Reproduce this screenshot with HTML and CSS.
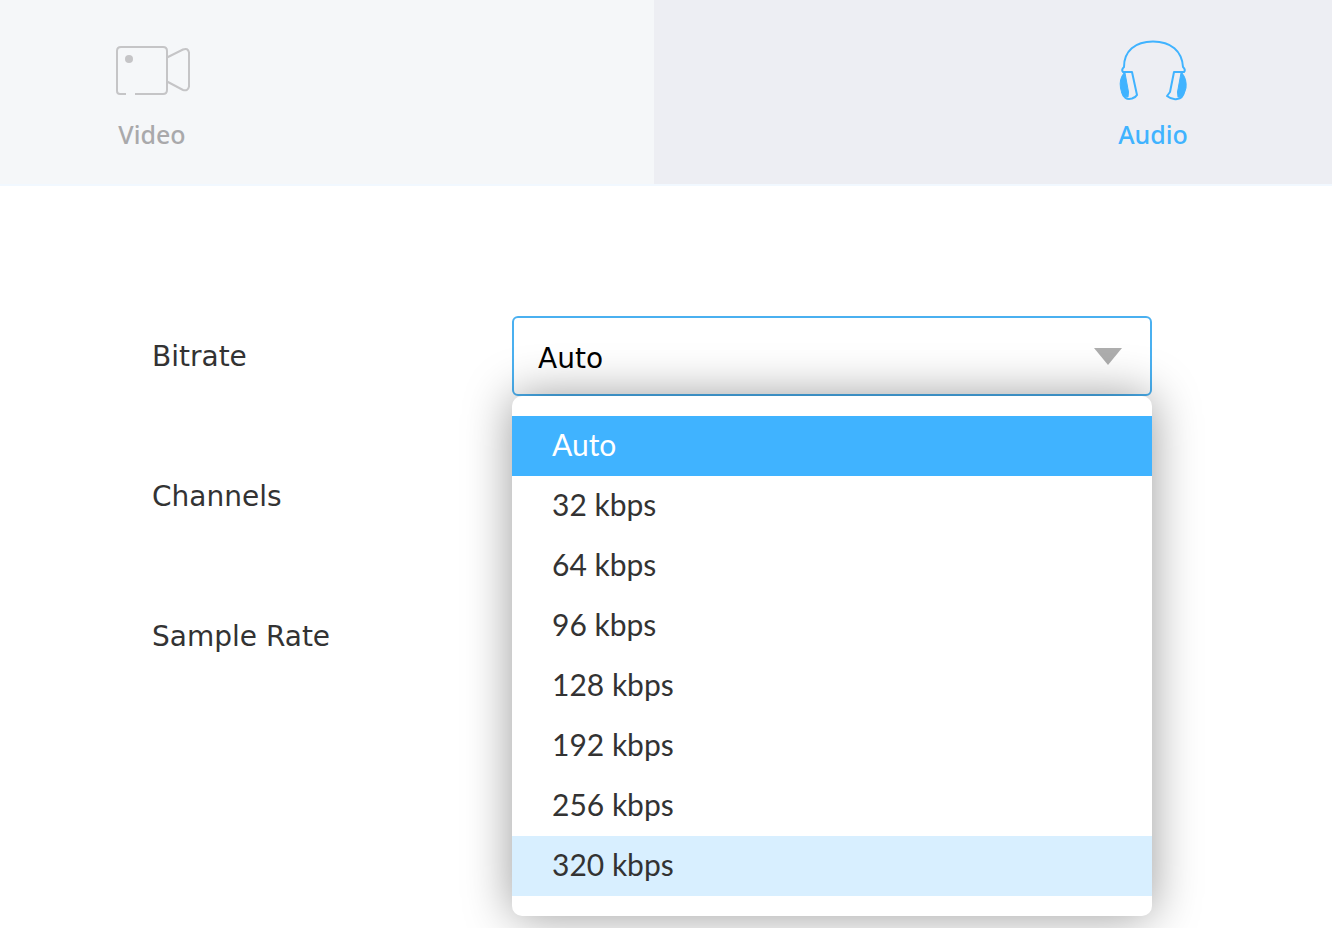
FILE: index.html
```html
<!DOCTYPE html>
<html lang="en">
<head>
<meta charset="utf-8">
<title>Audio settings</title>
<link rel="stylesheet" href="styles.css">
</head>
<body>
<nav class="tabs">
  <button class="tab tab-video" type="button">
    <span class="tab-content">
      <svg class="tab-icon" width="76" height="64" viewBox="0 0 76 64" fill="none" stroke="#c5c5c7" stroke-width="2" aria-hidden="true">
        <path d="M12 55H6q-3 0-3-3V12q0-4 4-4h42q4 0 4 4v39q0 4-4 4H21"/>
        <path d="M53 18.500 69 10.500q5-2 6 3v34q-1 5-6 3.500L53 42.500"/>
        <circle cx="15" cy="20" r="4" fill="#c5c5c7" stroke="none"/>
      </svg>
      <span>Video</span>
    </span>
  </button>
  <button class="tab tab-audio" type="button">
    <span class="tab-content">
      <svg class="tab-icon" width="76" height="64" viewBox="0 0 76 64" fill="none" stroke="#40b3ff" stroke-width="2" stroke-linejoin="round" aria-hidden="true">
        <path d="M11 33H8q-2-2 1-5C9 12 20 2.500 38 2.500S67 12 68 28q3 3 1 5h-4"/>
        <path d="M8 33h9l5 23q-1 2-5 3.500-8 2-10-6.500"/>
        <path d="M68 33h-9l-4 20-3 4q5 4 10 3 6-1 7-7"/>
        <path d="M9 34q-5 6-3.500 15Q7 58 13 58l.5-5L10 34zM67 34q5 6 4 15-2 9-8 9l-.5-5L66 34z" fill="#40b3ff" stroke-width="1"/>
      </svg>
      <span>Audio</span>
    </span>
  </button>
</nav>
<main class="settings">
  <div class="row">
    <label class="label" for="bitrate">Bitrate</label>
    <div class="field">
      <select class="select select-open" id="bitrate"><option>Auto</option></select>
      <svg class="arrow" width="28" height="17" viewBox="0 0 28 17" aria-hidden="true"><path d="M0 0h28L14 17z" fill="#aeaeae"/></svg>
      <div class="menu" role="listbox" aria-label="Bitrate">
        <button class="option option-selected" type="button" role="option" aria-selected="true">Auto</button>
        <button class="option" type="button" role="option">32 kbps</button>
        <button class="option" type="button" role="option">64 kbps</button>
        <button class="option" type="button" role="option">96 kbps</button>
        <button class="option" type="button" role="option">128 kbps</button>
        <button class="option" type="button" role="option">192 kbps</button>
        <button class="option" type="button" role="option">256 kbps</button>
        <button class="option option-hover" type="button" role="option">320 kbps</button>
      </div>
    </div>
  </div>
  <div class="row">
    <label class="label" for="channels">Channels</label>
    <div class="field"><select class="select" id="channels"></select></div>
  </div>
  <div class="row">
    <label class="label" for="rate">Sample Rate</label>
    <div class="field"><select class="select" id="rate"></select></div>
  </div>
</main>
</body>
</html>
```

FILE: styles.css
```css
* { box-sizing: border-box; }

body {
  min-height: 100vh;
  margin: 0;
  background: #fff;
  color: #333;
  font-family: "DejaVu Sans", Verdana, sans-serif;
  font-size: 28px;
}

.tabs {
  display: grid;
  grid-template-columns: 654fr 678fr;
  border-bottom: 2px solid #f1f8ff;
}

.tab {
  display: flex;
  border: 0;
  padding: 39px 114px 34px;
  background: #f5f7f9;
  color: #a9a9ab;
  font: 500 25px/32px "Noto Sans", sans-serif;
}

.tab-audio {
  justify-content: flex-end;
  padding-right: 141px;
  background: #edeef3;
  color: #40b3ff;
}

.tab-content {
  display: flex;
  flex-direction: column;
  align-items: center;
  gap: 15px;
}

.tab-icon {
  display: block;
  overflow: visible;
}

.settings {
  display: flex;
  flex-direction: column;
  gap: 60px;
  padding: 130px 180px 0 152px;
}

.row {
  display: grid;
  grid-template-columns: 360px 1fr;
  align-items: center;
}

.field { position: relative; }

.select {
  display: block;
  width: 100%;
  height: 80px;
  padding: 4px 24px 0;
  border: 2px solid #d5d5d5;
  border-radius: 6px;
  appearance: none;
  background: #fff;
  color: #000;
  font: inherit;
}

.select-open { border-color: #4ab0f0; }

.arrow {
  position: absolute;
  top: 32px;
  right: 30px;
  pointer-events: none;
}

.menu {
  position: absolute;
  z-index: 1;
  top: 100%;
  left: 0;
  width: 100%;
  padding: 20px 0;
  border-radius: 10px;
  background: #fff;
  box-shadow: 0 0 48px rgba(0, 0, 0, 0.4);
}

.option {
  display: block;
  width: 100%;
  height: 60px;
  padding: 0 40px 4px;
  border: 0;
  background: #fff;
  color: #333;
  font: 30px/56px Lato, sans-serif;
  text-align: left;
}

.option-selected {
  background: #40b3ff;
  color: #fff;
}

.option-hover { background: #d8efff; }
```
